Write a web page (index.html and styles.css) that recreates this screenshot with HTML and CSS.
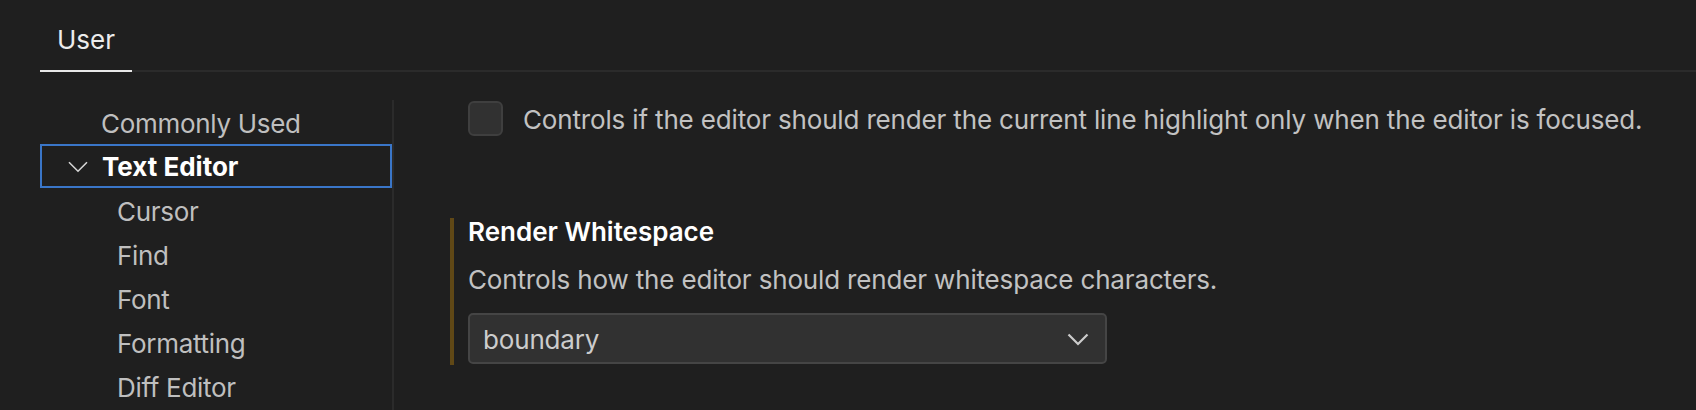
FILE: index.html
```html
<!DOCTYPE html>
<html lang="en">
<head>
<meta charset="utf-8">
<title>Settings</title>
<link rel="stylesheet" href="styles.css">
</head>
<body>
<div class="settings">
  <div class="tabs">
    <div class="tab active">User</div>
  </div>
  <div class="body">
    <nav class="toc">
      <div class="toc-item top">Commonly Used</div>
      <div class="toc-item top expanded selected">
        <svg class="twistie" width="20" height="12" viewBox="0 0 20 12"><path d="M1 1.2 L10 10.2 L19 1.2" fill="none" stroke="#d6d6d6" stroke-width="1.6"/></svg>
        <span>Text Editor</span>
      </div>
      <div class="toc-item child">Cursor</div>
      <div class="toc-item child">Find</div>
      <div class="toc-item child">Font</div>
      <div class="toc-item child">Formatting</div>
      <div class="toc-item child">Diff Editor</div>
    </nav>
    <main class="list">
      <div class="setting bool">
        <div class="check-row">
          <span class="checkbox"></span>
          <span class="desc">Controls if the editor should render the current line highlight only when the editor is focused.</span>
        </div>
      </div>
      <div class="setting modified">
        <div class="title">Render Whitespace</div>
        <div class="desc">Controls how the editor should render whitespace characters.</div>
        <div class="select">
          <span class="select-value">boundary</span>
          <svg class="select-arrow" width="22" height="13" viewBox="0 0 22 13"><path d="M1.5 1.5 L11 11 L20.5 1.5" fill="none" stroke="#cccccc" stroke-width="2.2"/></svg>
        </div>
      </div>
    </main>
  </div>
</div>
</body>
</html>
```
FILE: styles.css
```css
html, body {
  margin: 0;
  padding: 0;
  background: #1f1f1f;
  height: 100%;
  overflow: hidden;
}
body {
  font-family: Inter, "Noto Sans", sans-serif;
  font-size: 26px;
  color: #cccccc;
  letter-spacing: -0.16px;
}
.settings {
  padding-left: 40px;
}
.tabs {
  display: flex;
  height: 70px;
  border-bottom: 2px solid #2b2b2b;
}
.tab {
  box-sizing: border-box;
  height: 72px;
  padding: 25px 17px 0;
  line-height: 30px;
  color: #ececec;
  border-bottom: 2px solid #e8e8e8;
  margin-bottom: -2px;
  letter-spacing: 0;
}
.body {
  display: flex;
  margin-top: 28px;
}
.toc {
  width: 352px;
  flex: none;
  border-right: 2px solid #2b2b2b;
  height: 320px;
}
.toc-item {
  height: 44px;
  box-sizing: border-box;
  display: flex;
  align-items: center;
  padding-top: 3px;
  line-height: 30px;
  color: #bfbfbf;
  white-space: nowrap;
  letter-spacing: -0.3px;
}
.toc-item.top {
  padding-left: 61px;
}
.toc-item.child {
  padding-left: 77px;
}
.toc-item.expanded {
  padding-left: 26px;
  padding-top: 1px;
  color: #ffffff;
  font-weight: 700;
  letter-spacing: 0;
}
.toc-item.selected {
  border: 2px solid #3a76c8;
}
.twistie {
  margin-right: 14px;
  margin-top: 0;
}
.list {
  flex: 1;
  padding-left: 56px;
}
.setting {
  border-left: 4px solid transparent;
  padding-left: 14px;
}
.check-row {
  display: flex;
  align-items: center;
  height: 37px;
}
.checkbox {
  width: 35px;
  height: 35px;
  box-sizing: border-box;
  border: 2px solid #3f3f3f;
  background: #313131;
  border-radius: 6px;
  margin-right: 20px;
  flex: none;
}
.desc {
  color: #c2c2c2;
  line-height: 30px;
  white-space: nowrap;
}
.check-row .desc {
  padding-top: 2px;
}
.setting.modified {
  margin-top: 81px;
  border-left-color: rgba(187, 128, 9, 0.42);
  padding-bottom: 1px;
}
.title {
  color: #ffffff;
  font-weight: 600;
  line-height: 28px;
  letter-spacing: 0;
}
.setting.modified .desc {
  margin-top: 19px;
}
.select {
  margin-top: 18px;
  width: 639px;
  height: 51px;
  box-sizing: border-box;
  border: 2px solid #454545;
  background: #313131;
  border-radius: 5px;
  display: flex;
  align-items: center;
  justify-content: space-between;
  padding: 2px 16px 0 13px;
}
.select-value {
  color: #cccccc;
  line-height: 30px;
}
.select-arrow {
  margin-top: -1px;
}
```
